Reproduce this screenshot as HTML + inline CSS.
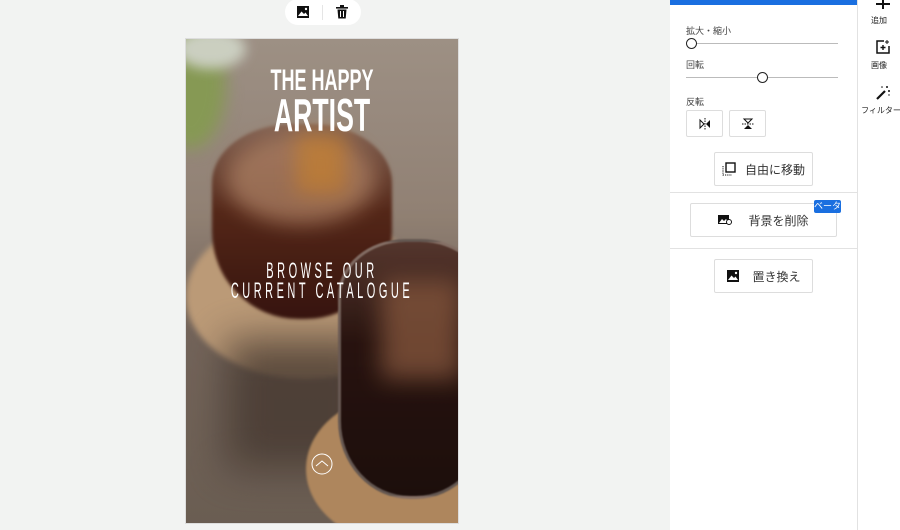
<!DOCTYPE html>
<html><head><meta charset="utf-8"><style>
*{margin:0;padding:0;box-sizing:border-box}
body{width:900px;height:530px;background:#f2f3f2;position:relative;overflow:hidden;font-family:"Liberation Sans","Noto Sans CJK JP",sans-serif;color:#333}
.a{position:absolute}
.btn{position:absolute;border:1px solid #ddd;background:#fff;border-radius:2px;font-size:12px;color:#333;display:flex;align-items:center;justify-content:center}
.lbl{position:absolute;font-size:9px;color:#444}
.track{position:absolute;height:1px;background:#bbb}
.knob{position:absolute;width:11px;height:11px;border:1.5px solid #222;border-radius:50%;background:#fff}
</style></head><body>
<div class="a" style="left:285px;top:-1px;width:76px;height:26px;background:#fff;border-radius:13px"></div>
<svg class="a" style="left:296px;top:5px" width="14" height="14" viewBox="0 0 14 14"><rect x="1" y="1" width="12" height="12" fill="#111"/><path d="M2 11 L5.5 6.5 L8 9 L9.5 7.5 L12 11Z" fill="#fff"/><circle cx="10" cy="4" r="1.2" fill="#fff"/></svg>
<div class="a" style="left:322px;top:5px;width:1px;height:15px;background:#e5e5e5"></div>
<svg class="a" style="left:336px;top:5px" width="12" height="14" viewBox="0 0 12 14"><rect x="0" y="2" width="12" height="1.6" fill="#111"/><rect x="4" y="0" width="4" height="2" fill="#111"/><path d="M1.5 4.5h9l-.8 9H2.3z" fill="#111"/><rect x="4" y="6" width="1" height="6" fill="#fff"/><rect x="7" y="6" width="1" height="6" fill="#fff"/></svg>

<div class="a" style="left:185px;top:38px;width:274px;height:486px;border:1px solid #ddd;background:#fff"></div>
<div class="a" style="left:186px;top:39px;width:272px;height:484px;overflow:hidden;background:linear-gradient(180deg,#a7998d 0%,#9b8a7c 35%,#7b6b60 60%,#716358 100%)">
 <div class="a" style="left:-30px;top:-20px;width:70px;height:130px;border-radius:50%;background:#8fa35a;filter:blur(8px)"></div>
 <div class="a" style="left:-10px;top:-10px;width:70px;height:40px;border-radius:50%;background:#d8dccd;filter:blur(6px)"></div>
 <div class="a" style="left:0px;top:175px;width:240px;height:165px;border-radius:50%;background:#c7a47f;filter:blur(3px)"></div>
 <div class="a" style="left:40px;top:300px;width:150px;height:130px;background:#4a3c33;filter:blur(20px);opacity:.8"></div>
 <div class="a" style="left:26px;top:85px;width:180px;height:195px;border-radius:45% 45% 48% 48%/30% 30% 45% 45%;background:linear-gradient(180deg,#8b6a5a 0%,#5a2a1a 45%,#3a1510 100%);filter:blur(1.5px)"></div>
 <div class="a" style="left:40px;top:95px;width:150px;height:90px;border-radius:50%;background:#b7886a;filter:blur(10px);opacity:.75"></div>
 <div class="a" style="left:110px;top:95px;width:50px;height:60px;background:#d98a2a;filter:blur(10px);opacity:.6"></div>
 <div class="a" style="left:120px;top:355px;width:190px;height:150px;border-radius:50%;background:#b98f63;filter:blur(1px)"></div>
 <div class="a" style="left:152px;top:200px;width:150px;height:260px;border-radius:45% 45% 48% 48%/22% 22% 30% 30%;background:linear-gradient(180deg,#5a3a30 0%,#2a1410 40%,#1e0f0c 100%);border:3px solid rgba(220,210,200,.4);filter:blur(.8px)"></div>
 <div class="a" style="left:195px;top:240px;width:80px;height:100px;background:#8a5a40;filter:blur(12px);opacity:.8"></div>
 <div class="a" style="left:0;top:0;width:100%;height:100%;background:rgba(0,0,0,.06)"></div>
 <div class="a" style="left:0;top:27px;width:272px;text-align:center;color:#fff;font-weight:bold;font-size:30px;line-height:30px;transform:scaleX(.6)">THE HAPPY</div>
 <div class="a" style="left:0;top:53px;width:272px;text-align:center;color:#fff;font-weight:bold;font-size:46px;line-height:46px;transform:scaleX(.58)">ARTIST</div>
 <div class="a" style="left:-100px;top:222px;width:472px;text-align:center;color:#fff;font-size:22px;line-height:20px;letter-spacing:7px;white-space:nowrap;transform:scaleX(.5)">BROWSE OUR<br>CURRENT CATALOGUE</div>
 <svg class="a" style="left:125px;top:414px" width="22" height="22" viewBox="0 0 22 22"><circle cx="11" cy="11" r="10" fill="none" stroke="#fff" stroke-width="1"/><path d="M5 13 L11 8 L17 13" fill="none" stroke="#fff" stroke-width="1"/></svg>
</div>

<div class="a" style="left:670px;top:0;width:187px;height:530px;background:#fff"></div>
<div class="a" style="left:670px;top:0;width:187px;height:5px;background:#1a6fe0"></div>
<div class="a" style="left:857px;top:0;width:1px;height:530px;background:#e2e2e2"></div>
<div class="a" style="left:858px;top:0;width:42px;height:530px;background:#fff"></div>
<div class="lbl" style="left:686px;top:24px">拡大・縮小</div>
<div class="track" style="left:692px;top:43px;width:146px"></div>
<div class="knob" style="left:686px;top:38px"></div>
<div class="lbl" style="left:686px;top:58px">回転</div>
<div class="track" style="left:686px;top:77px;width:152px"></div>
<div class="knob" style="left:757px;top:72px"></div>
<div class="lbl" style="left:686px;top:95px">反転</div>
<div class="btn" style="left:686px;top:110px;width:37px;height:27px"><svg width="12" height="12" viewBox="0 0 12 12"><path d="M1 2v8l4-4z" fill="none" stroke="#111"/><path d="M11 2v8l-4-4z" fill="#111"/><path d="M6 0v12" stroke="#111" stroke-dasharray="1.5 1"/></svg></div>
<div class="btn" style="left:729px;top:110px;width:37px;height:27px"><svg width="12" height="12" viewBox="0 0 12 12"><path d="M2 1h8l-4 4z" fill="none" stroke="#111"/><path d="M2 11h8l-4-4z" fill="#111"/><path d="M0 6h12" stroke="#111" stroke-dasharray="1.5 1"/></svg></div>
<div class="btn" style="left:714px;top:152px;width:99px;height:34px"><svg width="14" height="14" viewBox="0 0 14 14" style="margin-right:9px"><rect x="4" y="1" width="9" height="9" fill="none" stroke="#111" stroke-width="1.4"/><path d="M1 4v9h9" fill="none" stroke="#111" stroke-dasharray="1.2 1"/></svg>自由に移動</div>
<div class="a" style="left:670px;top:192px;width:187px;height:1px;background:#e2e2e2"></div>
<div class="btn" style="left:690px;top:203px;width:147px;height:34px"><svg width="14" height="12" viewBox="0 0 14 12" style="margin-right:16px"><rect x="0" y="1" width="11" height="9" fill="#111"/><path d="M1 9l3-4 2 2 2-2 3 4z" fill="#fff"/><circle cx="11" cy="8" r="2.5" fill="#fff" stroke="#111"/></svg>背景を削除</div>
<div class="a" style="left:814px;top:200px;width:27px;height:13px;background:#1a6fe0;color:#fff;font-size:9px;line-height:13px;text-align:center;border-radius:2px">ベータ</div>
<div class="a" style="left:670px;top:248px;width:187px;height:1px;background:#e2e2e2"></div>
<div class="btn" style="left:714px;top:259px;width:99px;height:34px"><svg width="14" height="14" viewBox="0 0 14 14" style="margin-right:12px"><rect x="1" y="1" width="12" height="12" fill="#111"/><path d="M2 11 L5.5 6.5 L8 9 L9.5 7.5 L12 11Z" fill="#fff"/><circle cx="10" cy="4" r="1.2" fill="#fff"/></svg>置き換え</div>

<svg class="a" style="left:876px;top:0" width="14" height="10" viewBox="0 0 14 10"><path d="M7 -4v13M0 4h14" stroke="#111" stroke-width="2"/></svg>
<div class="a" style="left:858px;top:15px;width:42px;text-align:center;font-size:8px;color:#222">追加</div>
<svg class="a" style="left:876px;top:40px" width="14" height="14" viewBox="0 0 14 14"><path d="M8 1H1v12h12V6" fill="none" stroke="#111" stroke-width="1.5"/><path d="M7 5v5M4.5 7.5h5" stroke="#111" stroke-width="1.4"/><path d="M11 0v4M9 2h4" stroke="#111"/></svg>
<div class="a" style="left:858px;top:60px;width:42px;text-align:center;font-size:8px;color:#222">画像</div>
<svg class="a" style="left:876px;top:85px" width="15" height="15" viewBox="0 0 15 15"><path d="M1 14L9 6" stroke="#111" stroke-width="2.2"/><circle cx="11" cy="2" r="1" fill="#111"/><circle cx="13" cy="6" r="1" fill="#111"/><circle cx="6" cy="2" r="0.8" fill="#111"/><circle cx="13" cy="10" r="0.7" fill="#111"/></svg>
<div class="a" style="left:858px;top:105px;width:46px;text-align:center;font-size:8px;color:#222;white-space:nowrap">フィルター</div>
</body></html>
